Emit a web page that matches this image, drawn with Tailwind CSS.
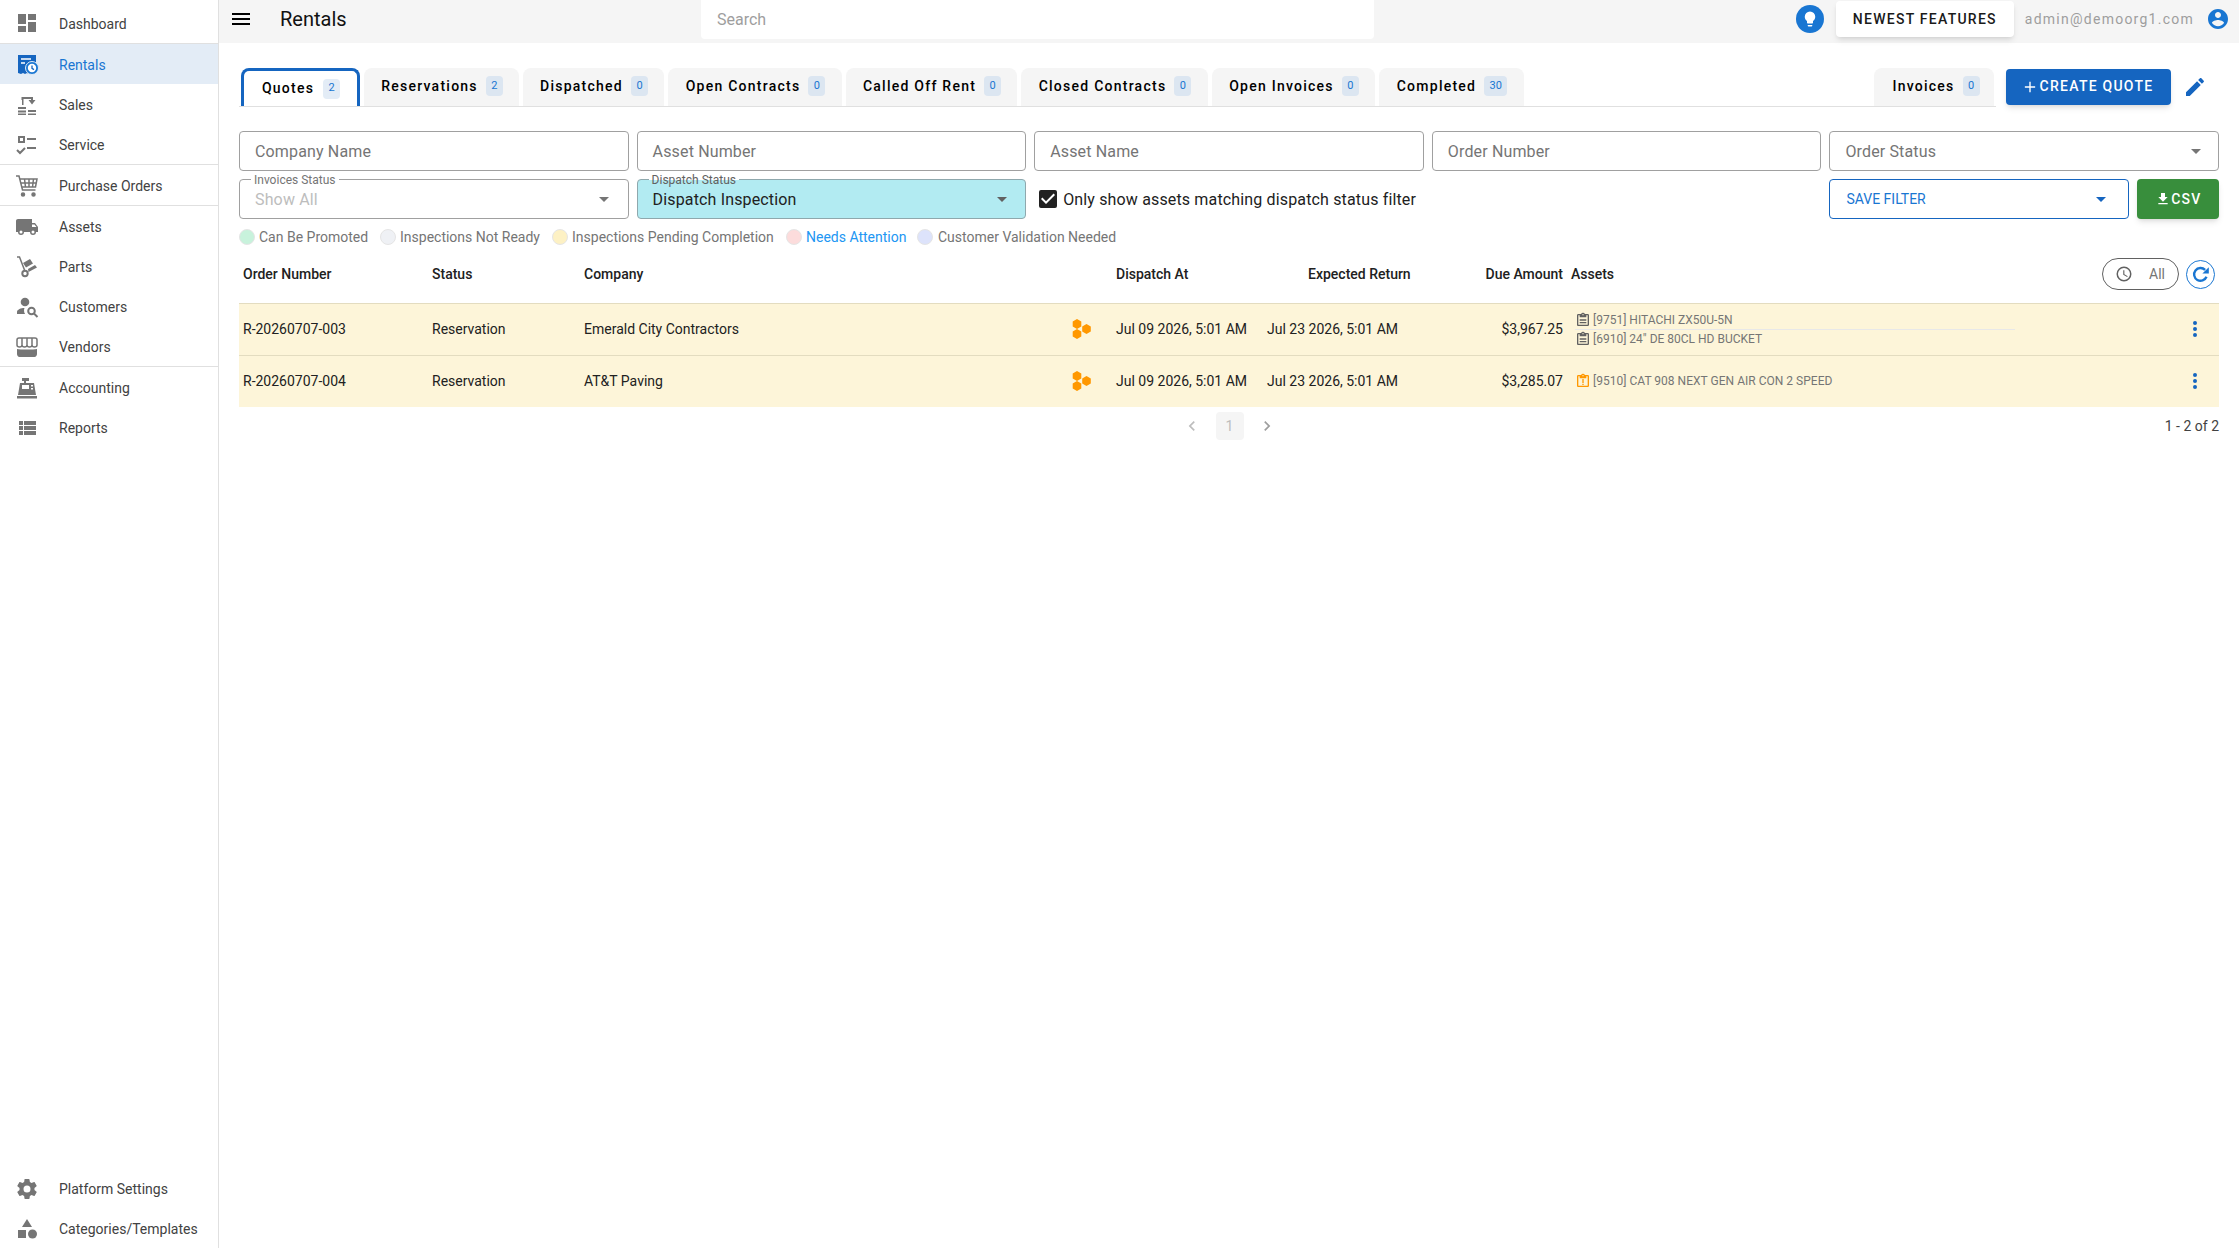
<!DOCTYPE html>
<html lang="en">
<head>
    <meta charset="UTF-8">
    <meta name="viewport" content="width=device-width, initial-scale=1.0">
    <script src="https://cdn.jsdelivr.net/npm/@tailwindcss/browser@4"></script>
    <title>Rentals</title>
</head>
<body class="bg-white font-['Roboto',sans-serif] text-[14px] text-[#212121] h-screen overflow-hidden flex">

    <!-- Sidebar -->
    <aside class="w-[219px] h-screen shrink-0 border-r border-[#e0e0e0] flex flex-col justify-between text-[#424242]">
        <nav>
            <div class="h-[43px] flex items-center pl-[15px] gap-5 pt-[3px]">
                <svg class="w-6 h-6" viewBox="0 0 24 24" fill="#757575"><path d="M3 13h8V3H3v10zm0 8h8v-6H3v6zm10 0h8V11h-8v10zm0-18v6h8V3h-8z"/></svg>
                <span class="pt-[2px]">Dashboard</span>
            </div>
            <div class="border-t border-[#e0e0e0]"></div>
            <div class="h-10 flex items-center pl-[15px] gap-5 pt-[2px] bg-[#e3ecf6] text-[#1976d2]">
                <svg class="w-6 h-6" viewBox="0 0 24 24"><path fill="#1565c0" d="M3 2h18v14l-3 5-2-1-2 1-2-1-2 1-2-1-2 1-3-1z"/><path stroke="#fff" stroke-width="1.5" d="M6 6h10M6 10h4"/><circle cx="17" cy="15" r="6.5" fill="#1976d2" stroke="#e3ecf6" stroke-width="1"/><circle cx="17" cy="15" r="4.2" fill="#fff"/><path stroke="#1565c0" stroke-width="1.3" fill="none" d="M17 12.5V15.4l2 1.2"/></svg>
                <span>Rentals</span>
            </div>
            <div class="h-10 flex items-center pl-[15px] gap-5 pt-[2px]">
                <svg class="w-6 h-6" viewBox="0 0 24 24" fill="#757575"><path d="M3 14h8v2H3zm0 3.500h8v2H3zm0 3h8v1.500H3zM13 17h8v2h-8zm0 3.500h8V22h-8zM7 7h-.5V4H18v3h2.500L17 11.500 13.500 7H16V6H8.500v6H7z"/></svg>
                <span>Sales</span>
            </div>
            <div class="h-10 flex items-center pl-[15px] gap-5 pt-[2px]">
                <svg class="w-6 h-6" viewBox="0 0 24 24" fill="#757575"><path d="M3 3h7v7H3zm2 2v3h3V5zM12 5h9v2h-9zM12 14h9v2h-9z"/><path fill="none" stroke="#757575" stroke-width="2" d="M2 17l3 3 5-5"/></svg>
                <span>Service</span>
            </div>
            <div class="border-t border-[#e0e0e0]"></div>
            <div class="h-10 flex items-center pl-[15px] gap-5 pt-[2px]">
                <svg class="w-6 h-6" viewBox="0 0 24 24" fill="none" stroke="#757575" stroke-width="1.500"><path d="M1 2h3l3.500 14h13M5 5h17l-1.500 8H7M9.500 5l1 8M14 5v8M18.500 5l-1 8M6 9h15"/><circle cx="8" cy="20.500" r="1.500" fill="#757575"/><circle cx="18.500" cy="20.500" r="1.500" fill="#757575"/></svg>
                <span>Purchase Orders</span>
            </div>
            <div class="border-t border-[#e0e0e0]"></div>
            <div class="h-10 flex items-center pl-[15px] gap-5 pt-[2px]">
                <svg class="w-6 h-6" viewBox="0 0 24 24" fill="#757575"><path d="M18 18.500a1.500 1.500 0 0 1-1.500-1.500 1.500 1.500 0 0 1 1.500-1.500 1.500 1.500 0 0 1 1.500 1.500 1.500 1.500 0 0 1-1.500 1.500m1.500-9 1.960 2.500H17V9.500M6 18.500A1.500 1.500 0 0 1 4.500 17 1.500 1.500 0 0 1 6 15.500 1.500 1.500 0 0 1 7.500 17 1.500 1.500 0 0 1 6 18.500M20 8h-3V4H3c-1.110 0-2 .89-2 2v11h2a3 3 0 0 0 3 3 3 3 0 0 0 3-3h6a3 3 0 0 0 3 3 3 3 0 0 0 3-3h2v-5l-3-4z"/></svg>
                <span>Assets</span>
            </div>
            <div class="h-10 flex items-center pl-[15px] gap-5 pt-[2px]">
                <svg class="w-6 h-6" viewBox="0 0 24 24"><path fill="none" stroke="#757575" stroke-width="1.500" d="M2 2h2.500l5 13"/><circle cx="10" cy="18.500" r="2.700" fill="none" stroke="#757575" stroke-width="2"/><path fill="#757575" d="M8 8l7-4 3 4.500-7 4zM13 14l7-4 2 2.500-8.500 4.500z"/></svg>
                <span>Parts</span>
            </div>
            <div class="h-10 flex items-center pl-[15px] gap-5 pt-[2px]">
                <svg class="w-6 h-6" viewBox="0 0 24 24" fill="#757575"><circle cx="10" cy="7" r="4.300"/><path d="M2 19v-2c0-2.500 4-4 7.500-4-.8 2-.6 4.300.6 6z"/><circle cx="16.500" cy="16" r="3.300" fill="none" stroke="#757575" stroke-width="2"/><path stroke="#757575" stroke-width="2" d="M19 18.500l3.500 3.500"/></svg>
                <span>Customers</span>
            </div>
            <div class="h-10 flex items-center pl-[15px] gap-5 pt-[2px]">
                <svg class="w-6 h-6" viewBox="0 0 24 24"><path fill="none" stroke="#757575" stroke-width="1.500" d="M4 3h16c1.500 0 2 1 2 2v5c0 1.500-1.500 2-2.500 2s-2.500-.5-2.500-2c0 1.500-1.500 2-2.500 2S12 11.500 12 10c0 1.500-1.500 2-2.500 2S7 11.500 7 10c0 1.500-1.500 2-2.500 2S2 11.500 2 10V5c0-1 .5-2 2-2zM7 3.500V10M12 3.500V10M17 3.500V10"/><path fill="#757575" d="M2 14c3 .8 17 .8 20 0v5c0 1.500-1 3-2.500 3h-15C3 22 2 20.500 2 19z"/></svg>
                <span>Vendors</span>
            </div>
            <div class="border-t border-[#e0e0e0]"></div>
            <div class="h-10 flex items-center pl-[15px] gap-5 pt-[2px]">
                <svg class="w-6 h-6" viewBox="0 0 24 24" fill="#757575"><path d="M7 2h7v3h-3v2h8l2 12H3L5 7h4V5H7zM7 9v4h7V9zm9 0v1.500h2V9zm0 3v1.500h2V12zM2 20h20v2.500H2z"/></svg>
                <span>Accounting</span>
            </div>
            <div class="h-10 flex items-center pl-[15px] gap-5 pt-[2px]">
                <svg class="w-6 h-6" viewBox="0 0 24 24" fill="#757575"><path d="M4 14h4v-4H4v4zm0 5h4v-4H4v4zM4 9h4V5H4v4zm5 5h12v-4H9v4zm0 5h12v-4H9v4zM9 5v4h12V5H9z"/></svg>
                <span>Reports</span>
            </div>
        </nav>
        <nav>
            <div class="h-10 flex items-center pl-[15px] gap-5 pt-[2px]">
                <svg class="w-6 h-6" viewBox="0 0 24 24" fill="#757575"><path d="M12 15.500A3.500 3.500 0 0 1 8.500 12 3.500 3.500 0 0 1 12 8.500a3.500 3.500 0 0 1 3.500 3.500 3.500 3.500 0 0 1-3.500 3.500m7.430-2.530c.04-.32.07-.64.07-.97 0-.33-.03-.66-.07-1l2.110-1.630c.19-.15.24-.42.12-.64l-2-3.460c-.12-.22-.39-.31-.61-.22l-2.490 1c-.52-.39-1.060-.73-1.690-.98l-.37-2.650A.506.506 0 0 0 14 2h-4c-.25 0-.46.18-.5.42l-.37 2.650c-.63.25-1.170.59-1.690.98l-2.490-1c-.22-.09-.49 0-.61.22l-2 3.460c-.13.22-.07.49.12.64L4.570 11c-.04.34-.07.67-.07 1 0 .33.03.65.07.97l-2.110 1.660c-.19.15-.25.42-.12.64l2 3.460c.12.22.39.3.61.22l2.490-1.010c.52.4 1.060.74 1.690.99l.37 2.650c.04.24.25.42.5.42h4c.25 0 .46-.18.5-.42l.37-2.650c.63-.26 1.170-.59 1.690-.99l2.490 1.010c.22.08.49 0 .61-.22l2-3.460c.12-.22.07-.49-.12-.64l-2.110-1.660z"/></svg>
                <span>Platform Settings</span>
            </div>
            <div class="h-10 flex items-center pl-[15px] gap-5 pt-[2px]">
                <svg class="w-6 h-6" viewBox="0 0 24 24" fill="#757575"><path d="M12 2l5 8H7zM3 13h8v8H3z"/><circle cx="17.500" cy="17" r="4.500"/></svg>
                <span>Categories/Templates</span>
            </div>
        </nav>
    </aside>

    <!-- Main -->
    <main class="flex-1 min-w-0 flex flex-col">

        <!-- Top bar -->
        <header class="h-[43px] bg-[#f5f5f5] flex items-start relative">
            <svg class="w-6 h-6 ml-[10px] mt-[7px]" viewBox="0 0 24 24" fill="#000"><path d="M3 18h18v-2H3v2zm0-5h18v-2H3v2zm0-7v2h18V6H3z"/></svg>
            <h1 class="ml-[27px] mt-[6px] text-[20px] leading-[26px] text-[#111]">Rentals</h1>
            <div class="absolute left-[482px] top-0 w-[673px] h-[39px] bg-white rounded-br rounded-bl pl-[16px] flex items-center text-[16px] text-[#9e9e9e]">Search</div>
            <div class="ml-auto flex items-center pr-[9px] h-[38px]">
                <div class="w-7 h-7 rounded-full bg-[#1976d2] flex items-center justify-center">
                    <svg class="w-[18px] h-[18px]" viewBox="0 0 24 24" fill="#fff"><path d="M12 2a7 7 0 0 0-7 7c0 2.380 1.190 4.470 3 5.740V17a1 1 0 0 0 1 1h6a1 1 0 0 0 1-1v-2.260c1.810-1.270 3-3.360 3-5.740a7 7 0 0 0-7-7M9 21a1 1 0 0 0 1 1h4a1 1 0 0 0 1-1v-1H9v1z"/></svg>
                </div>
                <div class="ml-[12px] w-[178px] h-9 bg-white rounded shadow-md flex items-center justify-center font-medium text-[14px] tracking-[1.25px] text-[#1a1a1a]">NEWEST FEATURES</div>
                <span class="ml-[11px] text-[14px] tracking-[1.25px] text-[#9e9e9e]">admin@demoorg1.com</span>
                <svg class="w-6 h-6 ml-[12px]" viewBox="0 0 24 24" fill="#1976d2"><path d="M12 2C6.480 2 2 6.480 2 12s4.480 10 10 10 10-4.480 10-10S17.520 2 12 2zm0 3c1.660 0 3 1.340 3 3s-1.340 3-3 3-3-1.340-3-3 1.340-3 3-3zm0 14.200c-2.500 0-4.710-1.280-6-3.220.03-1.990 4-3.080 6-3.080 1.990 0 5.970 1.090 6 3.080-1.290 1.940-3.500 3.220-6 3.220z"/></svg>
            </div>
        </header>

        <!-- Tabs -->
        <div class="ml-[20px] mr-[20px] mt-[25px] flex items-end">
            <div class="flex-1 flex items-end gap-1 h-[39px] border-b border-[#e0e0e0] mr-[10px] pl-[2px]">
                <div class="w-[119px] h-[38px] rounded-t-lg border-[3px] border-b-0 border-[#1565c0] flex items-center justify-center gap-[9px] pl-[1px] font-medium tracking-[1.25px] text-[14px] text-black">Quotes <span class="w-[17px] h-[20px] rounded bg-[#e3ecf6] text-[#1976d2] text-[11px] tracking-normal font-normal flex items-center justify-center">2</span></div>
                <div class="w-[155px] h-[38px] rounded-t-lg bg-[#f5f5f5] flex items-center justify-center gap-[8px] pl-[1px] pb-[2px] font-medium tracking-[1.25px] text-[14px] text-black">Reservations <span class="w-[17px] h-[20px] rounded bg-[#dce6f1] text-[#1976d2] text-[11px] tracking-normal font-normal flex items-center justify-center">2</span></div>
                <div class="w-[141px] h-[38px] rounded-t-lg bg-[#f5f5f5] flex items-center justify-center gap-[8px] pl-[1px] pb-[2px] font-medium tracking-[1.25px] text-[14px] text-black">Dispatched <span class="w-[17px] h-[20px] rounded bg-[#dce6f1] text-[#1976d2] text-[11px] tracking-normal font-normal flex items-center justify-center">0</span></div>
                <div class="w-[174px] h-[38px] rounded-t-lg bg-[#f5f5f5] flex items-center justify-center gap-[8px] pl-[1px] pb-[2px] font-medium tracking-[1.25px] text-[14px] text-black">Open Contracts <span class="w-[17px] h-[20px] rounded bg-[#dce6f1] text-[#1976d2] text-[11px] tracking-normal font-normal flex items-center justify-center">0</span></div>
                <div class="w-[171px] h-[38px] rounded-t-lg bg-[#f5f5f5] flex items-center justify-center gap-[8px] pl-[1px] pb-[2px] font-medium tracking-[1.25px] text-[14px] text-black">Called Off Rent <span class="w-[17px] h-[20px] rounded bg-[#dce6f1] text-[#1976d2] text-[11px] tracking-normal font-normal flex items-center justify-center">0</span></div>
                <div class="w-[187px] h-[38px] rounded-t-lg bg-[#f5f5f5] flex items-center justify-center gap-[8px] pl-[1px] pb-[2px] font-medium tracking-[1.25px] text-[14px] text-black">Closed Contracts <span class="w-[17px] h-[20px] rounded bg-[#dce6f1] text-[#1976d2] text-[11px] tracking-normal font-normal flex items-center justify-center">0</span></div>
                <div class="w-[163px] h-[38px] rounded-t-lg bg-[#f5f5f5] flex items-center justify-center gap-[8px] pl-[1px] pb-[2px] font-medium tracking-[1.25px] text-[14px] text-black">Open Invoices <span class="w-[17px] h-[20px] rounded bg-[#dce6f1] text-[#1976d2] text-[11px] tracking-normal font-normal flex items-center justify-center">0</span></div>
                <div class="w-[145px] h-[38px] rounded-t-lg bg-[#f5f5f5] flex items-center justify-center gap-[8px] pl-[1px] pb-[2px] font-medium tracking-[1.25px] text-[14px] text-black">Completed <span class="w-[23px] h-[20px] rounded bg-[#dce6f1] text-[#1976d2] text-[11px] tracking-normal font-normal flex items-center justify-center">30</span></div>
                <div class="ml-auto mr-[2px] w-[120px] h-[38px] rounded-t-lg bg-[#f5f5f5] flex items-center justify-center gap-[8px] pl-[4px] pb-[2px] font-medium tracking-[1.25px] text-[14px] text-black">Invoices <span class="w-[17px] h-[20px] rounded bg-[#dce6f1] text-[#1976d2] text-[11px] tracking-normal font-normal flex items-center justify-center">0</span></div>
            </div>
            <div class="w-[165px] h-9 mb-[2px] rounded bg-[#1565c0] shadow-md text-white font-medium tracking-[1.25px] flex items-center justify-center gap-[4px] pb-[1px]">
                <svg class="w-3 h-3" viewBox="0 0 14 14" fill="#fff"><path d="M6.200 1h1.600v5.200H13v1.600H7.800V13H6.200V7.800H1V6.200h5.200z"/></svg>
                CREATE QUOTE
            </div>
            <div class="w-[48px] h-9 mb-[2px] flex items-center justify-end pr-[12px]">
                <svg class="w-6 h-6" viewBox="0 0 24 24" fill="#1565c0"><path d="M3 17.250V21h3.750L17.810 9.940l-3.750-3.750L3 17.250zM20.710 7.040c.39-.39.39-1.020 0-1.410l-2.340-2.340c-.39-.39-1.020-.39-1.410 0l-1.830 1.830 3.750 3.750 1.830-1.830z"/></svg>
            </div>
        </div>

        <!-- Filters -->
        <div class="ml-[20px] mr-[20px] mt-[24px] grid grid-cols-5 gap-x-2 gap-y-2 text-[16px] tracking-[.15px]">
            <div class="h-10 border border-[#a0a0a0] rounded flex items-center px-[15px] pt-[2px] text-[#757575]">Company Name</div>
            <div class="h-10 border border-[#a0a0a0] rounded flex items-center px-[15px] pt-[2px] text-[#757575]">Asset Number</div>
            <div class="h-10 border border-[#a0a0a0] rounded flex items-center px-[15px] pt-[2px] text-[#757575]">Asset Name</div>
            <div class="h-10 border border-[#a0a0a0] rounded flex items-center px-[15px] pt-[2px] text-[#757575]">Order Number</div>
            <div class="h-10 border border-[#a0a0a0] rounded flex items-center justify-between pl-[15px] pr-[17px] text-[#757575]">
                <span class="pt-[2px]">Order Status</span>
                <span class="w-0 h-0 border-x-[5px] border-x-transparent border-t-[5px] border-t-[#757575]"></span>
            </div>

            <div class="relative h-10 border border-[#a0a0a0] rounded flex items-center justify-between pl-[15px] pr-[19px] text-[#bdbdbd]">
                <span class="absolute left-[11px] -top-[6px] px-[3px] bg-white text-[12px] leading-[12px] tracking-normal text-[#757575]">Invoices Status</span>
                <span class="pt-[2px]">Show All</span>
                <span class="w-0 h-0 border-x-[5px] border-x-transparent border-t-[5px] border-t-[#757575]"></span>
            </div>
            <div class="relative h-10 border border-[#8fa8ad] rounded bg-[#b2ebf2] flex items-center justify-between pl-[15px] pr-[18px] text-[#212121]">
                <span class="absolute left-[11px] -top-[6px] px-[3px] bg-[linear-gradient(to_bottom,#fff_50%,#b2ebf2_50%)] text-[12px] leading-[12px] tracking-normal text-[#616161]">Dispatch Status</span>
                <span class="pt-[2px]">Dispatch Inspection</span>
                <span class="w-0 h-0 border-x-[5px] border-x-transparent border-t-[5px] border-t-[#616161]"></span>
            </div>
            <div class="col-span-2 flex items-center pl-[2px] gap-[3px] text-[#212121]">
                <svg class="w-6 h-6" viewBox="0 0 24 24" fill="#212121"><path d="M19 3H5a2 2 0 0 0-2 2v14a2 2 0 0 0 2 2h14a2 2 0 0 0 2-2V5a2 2 0 0 0-2-2zm-9 14l-5-5 1.410-1.410L10 14.170l7.590-7.590L19 8l-9 9z"/></svg>
                <span class="pt-[1px]">Only show assets matching dispatch status filter</span>
            </div>
            <div class="flex gap-2 tracking-normal">
                <div class="w-[300px] shrink-0 h-10 border border-[#1565c0] rounded flex items-center justify-between pl-[16px] pr-[22px] text-[14px] text-[#1976d2]">
                    SAVE FILTER
                    <span class="w-0 h-0 border-x-[5px] border-x-transparent border-t-[5px] border-t-[#1565c0]"></span>
                </div>
                <div class="w-[82px] shrink-0 h-10 rounded bg-[#388e3c] shadow-md text-white text-[14px] font-medium tracking-[1.25px] flex items-center justify-center">
                    <svg class="w-4 h-4" viewBox="0 0 24 24" fill="#fff"><path d="M5 20h14v-2H5v2zM19 9h-4V3H9v6H5l7 7 7-7z"/></svg>
                    CSV
                </div>
            </div>
        </div>

        <!-- Legend -->
        <div class="ml-[20px] mt-[10px] h-4 flex items-center text-[14px] text-[#757575]">
            <span class="w-4 h-4 rounded-full bg-[#c8f2dc] border border-[#e5e5e5]"></span><span class="ml-1 w-[121px]">Can Be Promoted</span>
            <span class="w-4 h-4 rounded-full bg-[#eff1f5] border border-[#e5e5e5]"></span><span class="ml-1 w-[152px]">Inspections Not Ready</span>
            <span class="w-4 h-4 rounded-full bg-[#fdf1c4] border border-[#e5e5e5]"></span><span class="ml-1 w-[214px]">Inspections Pending Completion</span>
            <span class="w-4 h-4 rounded-full bg-[#fcdcdc] border border-[#e5e5e5]"></span><span class="ml-1 w-[111px] text-[#2196f3]">Needs Attention</span>
            <span class="w-4 h-4 rounded-full bg-[#dde3fb] border border-[#e5e5e5]"></span><span class="ml-[5px]">Customer Validation Needed</span>
        </div>

        <!-- Table -->
        <div class="ml-[20px] mr-[20px] mt-[9px]">
            <div class="h-[49px] pb-[9px] pl-[4px] grid grid-cols-[189px_152px_488px_44px_151px_133px_163px_1fr] items-center font-medium text-[#212121]">
                <div>Order Number</div>
                <div>Status</div>
                <div>Company</div>
                <div></div>
                <div>Dispatch At</div>
                <div class="pl-[41px] whitespace-nowrap">Expected Return</div>
                <div class="text-right">Due Amount</div>
                <div class="flex items-center justify-between pl-2">
                    <span>Assets</span>
                    <div class="flex items-center gap-[7px] mr-[4px]">
                        <div class="w-[77px] h-[32px] rounded-full border border-[#616161] flex items-center justify-between pl-[12px] pr-[13px] text-[#757575] font-normal">
                            <svg class="w-[18px] h-[18px]" viewBox="0 0 24 24" fill="#616161"><path d="M12 2a10 10 0 1 0 0 20 10 10 0 0 0 0-20zm0 18a8 8 0 1 1 0-16 8 8 0 0 1 0 16zm.5-13H11v6l5.200 3.100.8-1.200-4.500-2.700z"/></svg>
                            All
                        </div>
                        <div class="w-[29px] h-[29px] rounded-full border border-[#1976d2] flex items-center justify-center">
                            <svg class="w-[22px] h-[22px]" viewBox="0 0 24 24" fill="none" stroke="#1976d2" stroke-width="2.600"><path d="M18 15a7 7 0 1 1-1.500-7.500"/><path fill="#1976d2" stroke="none" d="M20.500 4.500v7h-7z"/></svg>
                        </div>
                    </div>
                </div>
            </div>

            <div class="h-[52px] pl-[4px] bg-[#fdf5d9] border-t border-[#e3dcc0] grid grid-cols-[189px_152px_488px_44px_151px_133px_163px_1fr] items-center text-[#212121]">
                <div>R-20260707-003</div>
                <div>Reservation</div>
                <div>Emerald City Contractors</div>
                <svg class="w-[20px] h-[20px] mb-[2px]" viewBox="0 0 20 20" fill="#ff9800"><path d="M5 0l4.300 2.500v5L5 10 .7 7.500v-5zM5 10l4.300 2.500v5L5 20 .7 17.500v-5zM14.500 5l4.300 2.500v5L14.500 15l-4.300-2.500v-5z"/></svg>
                <div class="whitespace-nowrap">Jul 09 2026, 5:01 AM</div>
                <div class="whitespace-nowrap">Jul 23 2026, 5:01 AM</div>
                <div class="text-right">$3,967.25</div>
                <div class="flex items-center justify-between pl-[12px] pr-[12px]">
                    <div class="w-[440px] text-[12px] leading-[18px] text-[#757575]">
                        <div class="flex items-center border-b border-[#e8e8e8] h-[18px]"><svg class="w-4 h-4 mr-[2px]" viewBox="0 0 24 24" fill="#616161"><path d="M19 3h-4.180A3 3 0 0 0 12 1a3 3 0 0 0-2.820 2H5a2 2 0 0 0-2 2v14c0 1.100.9 2 2 2h14a2 2 0 0 0 2-2V5a2 2 0 0 0-2-2zm-7 0a1 1 0 1 1 0 2 1 1 0 0 1 0-2zm7 16H5V5h2v3h10V5h2v14zM7 11h10v2H7zm0 4h10v2H7z"/></svg>[9751] HITACHI ZX50U-5N</div>
                        <div class="flex items-center h-[18px]"><svg class="w-4 h-4 mr-[2px]" viewBox="0 0 24 24" fill="#616161"><path d="M19 3h-4.180A3 3 0 0 0 12 1a3 3 0 0 0-2.820 2H5a2 2 0 0 0-2 2v14c0 1.100.9 2 2 2h14a2 2 0 0 0 2-2V5a2 2 0 0 0-2-2zm-7 0a1 1 0 1 1 0 2 1 1 0 0 1 0-2zm7 16H5V5h2v3h10V5h2v14zM7 11h10v2H7zm0 4h10v2H7z"/></svg>[6910] 24" DE 80CL HD BUCKET</div>
                    </div>
                    <svg class="w-6 h-6 mb-[2px]" viewBox="0 0 24 24" fill="#1565c0"><path d="M12 8a2 2 0 1 0 0-4 2 2 0 0 0 0 4zm0 2a2 2 0 1 0 0 4 2 2 0 0 0 0-4zm0 6a2 2 0 1 0 0 4 2 2 0 0 0 0-4z"/></svg>
                </div>
            </div>
            <div class="h-[52px] pl-[4px] bg-[#fdf5d9] border-t border-[#e3dcc0] grid grid-cols-[189px_152px_488px_44px_151px_133px_163px_1fr] items-center text-[#212121]">
                <div>R-20260707-004</div>
                <div>Reservation</div>
                <div>AT&amp;T Paving</div>
                <svg class="w-[20px] h-[20px] mb-[2px]" viewBox="0 0 20 20" fill="#ff9800"><path d="M5 0l4.300 2.500v5L5 10 .7 7.500v-5zM5 10l4.300 2.500v5L5 20 .7 17.500v-5zM14.500 5l4.300 2.500v5L14.500 15l-4.300-2.500v-5z"/></svg>
                <div class="whitespace-nowrap">Jul 09 2026, 5:01 AM</div>
                <div class="whitespace-nowrap">Jul 23 2026, 5:01 AM</div>
                <div class="text-right">$3,285.07</div>
                <div class="flex items-center justify-between pl-[12px] pr-[12px]">
                    <div class="text-[12px] text-[#757575] flex items-center tracking-[.02px] mb-[1px]"><svg class="w-4 h-4 mr-[2px]" viewBox="0 0 24 24" fill="#ff9800"><path d="M19 3h-4.180A3 3 0 0 0 12 1a3 3 0 0 0-2.820 2H5a2 2 0 0 0-2 2v14c0 1.100.9 2 2 2h14a2 2 0 0 0 2-2V5a2 2 0 0 0-2-2zm-7 0a1 1 0 1 1 0 2 1 1 0 0 1 0-2zm7 16H5V5h2v3h10V5h2v14zM11 9h2v6h-2zm0 7h2v2h-2z"/></svg>[9510] CAT 908 NEXT GEN AIR CON 2 SPEED</div>
                    <svg class="w-6 h-6 mb-[2px]" viewBox="0 0 24 24" fill="#1565c0"><path d="M12 8a2 2 0 1 0 0-4 2 2 0 0 0 0 4zm0 2a2 2 0 1 0 0 4 2 2 0 0 0 0-4zm0 6a2 2 0 1 0 0 4 2 2 0 0 0 0-4z"/></svg>
                </div>
            </div>

            <!-- Pagination -->
            <div class="relative mt-[5px] h-7 flex items-center justify-center">
                <div class="flex items-center text-[#bdbdbd]">
                    <svg class="w-5 h-5 mr-[14px]" viewBox="0 0 24 24" fill="#bdbdbd"><path d="M15.410 7.410L14 6l-6 6 6 6 1.410-1.410L10.830 12z"/></svg>
                    <span class="w-7 h-7 rounded bg-[#f5f5f5] flex items-center justify-center">1</span>
                    <svg class="w-5 h-5 ml-[13px]" viewBox="0 0 24 24" fill="#9e9e9e"><path d="M10 6L8.590 7.410 13.170 12l-4.580 4.590L10 18l6-6z"/></svg>
                </div>
                <span class="absolute right-0 top-[4px] text-[#424242]">1 - 2 of 2</span>
            </div>
        </div>
    </main>
</body>
</html>
